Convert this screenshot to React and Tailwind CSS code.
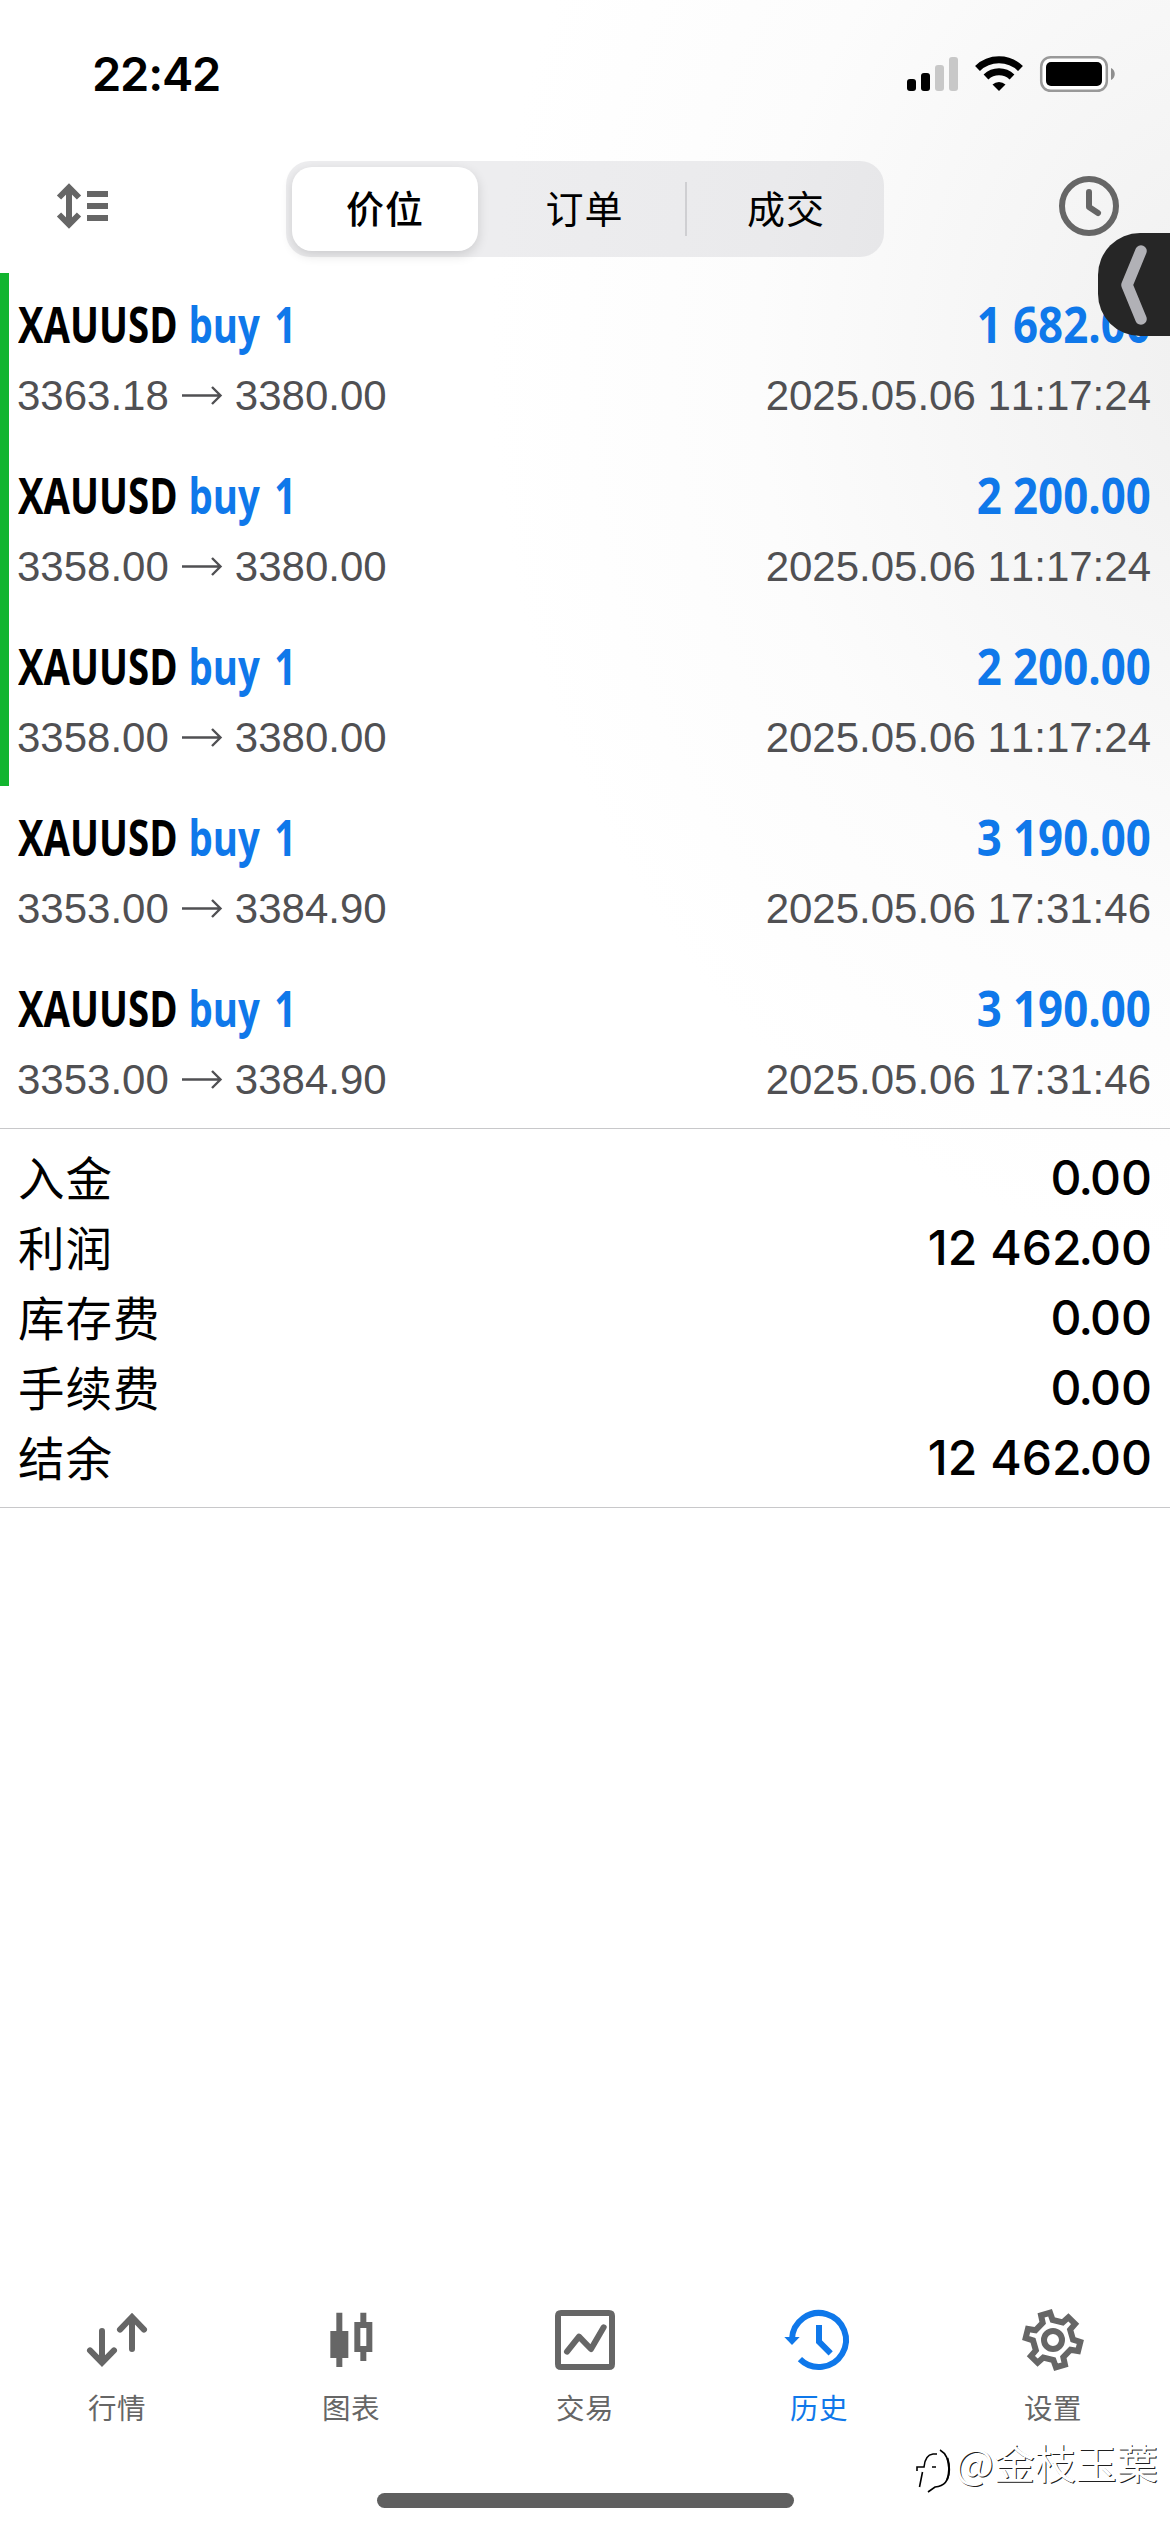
// src/App.jsx
const DEALS = [
  { open: '3363.18', close: '3380.00', profit: '1 682.00', time: '2025.05.06 11:17:24', marked: true },
  { open: '3358.00', close: '3380.00', profit: '2 200.00', time: '2025.05.06 11:17:24', marked: true },
  { open: '3358.00', close: '3380.00', profit: '2 200.00', time: '2025.05.06 11:17:24', marked: true },
  { open: '3353.00', close: '3384.90', profit: '3 190.00', time: '2025.05.06 17:31:46' },
  { open: '3353.00', close: '3384.90', profit: '3 190.00', time: '2025.05.06 17:31:46' },
]

const SUMMARY = [
  { label: '入金', value: '0.00' },
  { label: '利润', value: '12 462.00' },
  { label: '库存费', value: '0.00' },
  { label: '手续费', value: '0.00' },
  { label: '结余', value: '12 462.00' },
]

const SEGMENTS = [
  { label: '价位', box: 'w-[186px] mr-[6px] rounded-[20px] bg-white shadow-[0_4px_12px_rgba(0,0,0,0.14)] font-medium' },
  { label: '订单', box: 'w-[199px] pl-[2px]' },
  { label: '成交', box: 'w-[201px] pl-[5px]' },
]

// outline of the settings gear: six teeth, 60 degrees apart
function gearPath() {
  const tooth = [[58, -15.5], [81, -14], [81, 14], [58, 15.5]]
  const pts = []
  for (let i = 0; i < 6; i++) {
    const a = ((14 + i * 60) * Math.PI) / 180
    for (const [x, y] of tooth) {
      const px = 108 + x * Math.cos(a) - y * Math.sin(a)
      const py = 108 + x * Math.sin(a) + y * Math.cos(a)
      pts.push(`${px.toFixed(1)} ${py.toFixed(1)}`)
    }
  }
  return `M${pts.join('L')}Z`
}

function TabIcon({ children }) {
  return (
    <svg viewBox="0 0 216 216" className="size-[72px]" fill="none" stroke="currentColor" strokeWidth="18">
      {children}
    </svg>
  )
}

const TABS = [
  {
    label: '行情',
    icon: (
      <g strokeLinecap="round">
        <path d="M63 81V174M27 139L63 176L99 139" />
        <path d="M153 135V42M117 77L153 39L189 77" />
      </g>
    ),
  },
  {
    label: '图表',
    icon: (
      <g fill="currentColor" stroke="none">
        <path d="M64 26h18v55h18v81H82v27H64v-27H46V81h18z" />
        <path fillRule="evenodd" d="M136 26h18v28h18v90h-18v27h-18v-27h-18V54h18zM136 72v54h18V72z" />
      </g>
    ),
  },
  {
    label: '交易',
    icon: (
      <>
        <path
          fill="currentColor"
          stroke="none"
          fillRule="evenodd"
          d="M36 18H180Q198 18 198 36V180Q198 198 180 198H36Q18 198 18 180V36Q18 18 36 18ZM36 36V180H180V36Z"
        />
        <path d="M54 143L90 98L126 135L164 70" strokeLinecap="round" strokeLinejoin="round" />
      </>
    ),
  },
  {
    label: '历史',
    active: true,
    icon: (
      <>
        <path d="M50.7 165.3A81 81 0 1 0 27 105" />
        <path d="M4 99H50L27 123Z" fill="currentColor" stroke="none" />
        <path d="M108 63V113L143 148" />
      </>
    ),
  },
  {
    label: '设置',
    icon: (
      <>
        <path d={gearPath()} strokeWidth="18" />
        <circle cx="108" cy="108" r="27" />
      </>
    ),
  },
]

function StatusBar() {
  return (
    <div className="h-[152px] flex justify-between items-start pl-[92px] pr-[54px] pt-[51px]">
      <span className="font-[Inter] font-semibold text-[47px] leading-[46px] tracking-[-1.2px]">22:42</span>
      <svg width="209" height="40" viewBox="0 0 209 40" className="mt-[3px]">
        <rect x="0" y="25" width="9" height="12" rx="3" />
        <rect x="14" y="19" width="9" height="18" rx="3" />
        <rect x="28" y="11" width="9" height="26" rx="3" fill="#c8c8c8" />
        <rect x="42" y="3" width="9" height="34" rx="3" fill="#c8c8c8" />
        <g fill="none" stroke="#000" strokeWidth="7">
          <path d="M70.500 14.500A31 31 0 0 1 113.500 14.500" />
          <path d="M79 23A19 19 0 0 1 105 23" />
        </g>
        <path d="M92 37L85.500 30.500A9.500 9.500 0 0 1 98.500 30.500Z" />
        <rect x="134.200" y="3.200" width="65.600" height="33.600" rx="9.500" fill="#fff" stroke="#999" strokeWidth="2.500" />
        <rect x="139" y="8" width="56" height="24" rx="5" />
        <path d="M204 14C209 16 209 24 204 26Z" fill="#8e8e8e" />
      </svg>
    </div>
  )
}

function Header() {
  return (
    <div className="h-[121px] flex items-start pl-[48px] pr-[45px]">
      <svg width="72" height="72" viewBox="0 0 72 72" className="mt-[18px]" fill="none" stroke="#666" strokeWidth="6">
        <path d="M21 18V54M11 27.500L21 17.500L31 27.500M11 44.500L21 54.500L31 44.500M39 24H60M39 36H60M39 48H60" />
      </svg>

      <div className="w-[598px] h-[96px] mt-[9px] ml-[166px] mr-auto pl-[6px] py-[6px] flex items-center rounded-[24px] bg-[#767680]/13">
        {SEGMENTS.map(({ label, box }, i) => (
          <div key={label} className={`h-full pb-[5px] flex items-center justify-center text-[38px] tracking-[1px] ${box}`}>
            {label}
            {i === 1 && <span className="relative left-[61px] top-[2px] w-[2px] -mr-[2px] h-[54px] bg-[#cfcfd2]" />}
          </div>
        ))}
      </div>

      <svg width="72" height="72" viewBox="0 0 72 72" className="mt-[18px]" fill="none" stroke="#666" strokeWidth="6">
        <circle cx="36" cy="36" r="27" />
        <path d="M36 22V37L45 43" strokeLinecap="round" strokeLinejoin="round" />
      </svg>
    </div>
  )
}

function Deal({ open, close, profit, time, marked }) {
  return (
    <div className={`h-[171px] pr-[19px] border-l-[9px] ${marked ? 'border-[#12b52f]' : 'border-transparent'}`}>
      <div className="h-[99px] pt-[19px] pl-[9px] flex justify-between font-['Open_Sans'] font-bold text-[49.5px] leading-[64px] whitespace-pre">
        <div className="flex gap-[14px] origin-left scale-x-[0.775]">
          <span>XAUUSD</span>
          <span className="text-[#0f78ea] [word-spacing:6px]">buy 1</span>
        </div>
        <div className="origin-right scale-x-[0.885] text-[#0f78ea]">{profit}</div>
      </div>
      <div className="pl-[8px] flex justify-between font-['Liberation_Sans'] text-[42px] leading-[48px] text-[#505053] [font-kerning:none]">
        <div className="flex gap-[12px]">
          <span>{open}</span>
          <svg width="42" height="48" viewBox="0 0 42 48" fill="none" stroke="currentColor" strokeWidth="2.400">
            <path d="M1 23.500H39M31 15L39.500 23.500L31 32" />
          </svg>
          <span>{close}</span>
        </div>
        <span>{time}</span>
      </div>
    </div>
  )
}

// amount with the decimal point set a little tighter
function Amount({ value }) {
  const [whole, cents] = value.split('.')
  return (
    <span className="font-[Inter] font-medium text-[48px] leading-[70px]">
      {whole}<span className="-mx-[3px]">.</span>{cents}
    </span>
  )
}

export default function App() {
  return (
    <div className="relative w-[1170px] h-[2532px] flex flex-col overflow-hidden text-black font-['Noto_Sans_CJK_SC',sans-serif] bg-white bg-[radial-gradient(ellipse_760px_900px_at_1250px_360px,#efefef_0%,#f4f4f4_25%,#fcfcfc_65%,#ffffff_100%)]">
      <StatusBar />
      <Header />

      {/* closed deals */}
      <div className="h-[855px]">
        {DEALS.map((deal, i) => <Deal key={i} {...deal} />)}
      </div>

      {/* totals */}
      <div className="h-[380px] pt-[14px] border-y border-[#c8c8ca]">
        {SUMMARY.map(({ label, value }) => (
          <div key={label} className="h-[70px] px-[18px] flex items-center justify-between">
            <span className="pb-[5px] text-[46.5px] leading-[70px] tracking-[1px]">{label}</span>
            <Amount value={value} />
          </div>
        ))}
      </div>

      <div className="flex-1" />

      {/* tab bar */}
      <div className="h-[228px] flex">
        {TABS.map(({ label, icon, active }) => (
          <div key={label} className={`w-[234px] flex flex-col items-center ${active ? 'text-[#0f78ea]' : 'text-[#666]'}`}>
            <TabIcon>{icon}</TabIcon>
            <span className="mt-[11px] text-[28.5px] leading-[40px] tracking-[0.5px]">{label}</span>
          </div>
        ))}
      </div>

      <div className="absolute left-[377px] top-[2493px] w-[417px] h-[15px] rounded-full bg-[#5f5f5f]" />

      {/* floating handle */}
      <div className="absolute right-0 top-[233px] w-[72px] h-[103px] rounded-l-[42px] bg-[#262626]">
        <svg width="72" height="103" viewBox="0 0 72 103" fill="none" stroke="#b1b1b6" strokeWidth="11.500">
          <path d="M43 18L29 52L43 86" strokeLinecap="round" strokeLinejoin="round" />
        </svg>
      </div>

      {/* watermark */}
      <div className="absolute left-[914px] top-[2435px] flex items-start text-white">
        <svg width="41" height="60" viewBox="0 0 41 60" fill="none" stroke="#000" strokeWidth="1.600">
          <path d="M3 36V32H10Q11 20 19 19H23M8.500 37L5.500 52M18 32H22" />
          <path d="M26 15Q35 20 35 35Q35 51 21 52L14 57" />
          <path d="M33.500 23Q37 35 33 45" strokeWidth="2" />
        </svg>
        <span className="text-[41px] leading-[52px] [text-shadow:1px_1px_0.5px_rgba(0,0,0,0.9)]">@金枝玉葉</span>
      </div>
    </div>
  )
}
